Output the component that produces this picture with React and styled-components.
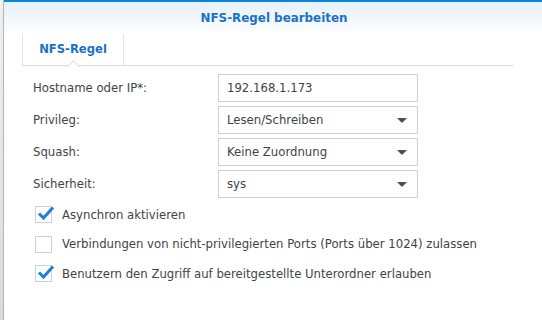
import React from "react";
import styled, { createGlobalStyle } from "styled-components";

const Global = createGlobalStyle`
  html, body {
    margin: 0;
    padding: 0;
    width: 542px;
    height: 320px;
    overflow: hidden;
    background: #fff;
  }
  body {
    font-family: "DejaVu Sans", Verdana, sans-serif;
  }
`;

const Screen = styled.div`
  display: flex;
  width: 542px;
  height: 320px;
`;

const Backdrop = styled.div`
  width: 3px;
  flex: none;
  background: linear-gradient(#f0f0f0, #dadada);
  border-right: 1px solid #b4b4b4;
`;

const Dialog = styled.div`
  flex: 1;
  display: flex;
  flex-direction: column;
  border-top: 2px solid #0a86d8;
  background: #fff;
`;

const Header = styled.div`
  height: 32px;
  display: flex;
  justify-content: center;
  align-items: center;
  background: linear-gradient(#e6f0fa, #fdfeff);
  h1 {
    margin: 0;
    font-size: 11.9px;
    font-weight: bold;
    color: #1a72c6;
    padding-left: 2px;
  }
`;

const TabBar = styled.div`
  position: relative;
  margin: 0 29px 0 18px;
  height: 31px;
  display: flex;
  border-bottom: 1px solid #dcdcdc;
`;

const Tab = styled.div`
  position: relative;
  width: 100px;
  display: flex;
  align-items: center;
  justify-content: center;
  padding-bottom: 2px;
  border-left: 1px solid #e4e4e4;
  border-right: 1px solid #e4e4e4;
  font-size: 11.6px;
  font-weight: bold;
  color: #1a72c6;
  &::after {
    content: "";
    position: absolute;
    left: 46px;
    bottom: -1px;
    width: 8px;
    height: 8px;
    background: #fff;
    border-left: 1px solid #dcdcdc;
    border-top: 1px solid #dcdcdc;
    transform: translateY(5px) rotate(45deg);
  }
`;

const Form = styled.div`
  display: flex;
  flex-direction: column;
  gap: 4px;
  padding: 8px 0 0 29px;
`;

const Row = styled.div`
  display: flex;
  align-items: center;
  height: 28px;
`;

const Label = styled.div`
  width: 185px;
  font-size: 11.7px;
  color: #404448;
`;

const Field = styled.div`
  box-sizing: border-box;
  width: 200px;
  height: 28px;
  border: 1px solid #cdd0d4;
  display: flex;
  align-items: center;
  justify-content: space-between;
  padding: 0 8px 0 8px;
  font-size: 11.7px;
  color: #404448;
`;

const Arrow = styled.span`
  width: 0;
  height: 0;
  border-left: 5px solid transparent;
  border-right: 5px solid transparent;
  border-top: 5px solid #4a4e54;
  margin-right: 2px;
`;

const Checks = styled.div`
  display: flex;
  flex-direction: column;
  gap: 12.5px;
  padding: 8px 0 0 31px;
`;

const CheckRow = styled.div`
  display: flex;
  align-items: center;
  gap: 10px;
  height: 17px;
  font-size: 11.7px;
  color: #404448;
`;

const Box = styled.span`
  position: relative;
  box-sizing: border-box;
  width: 17px;
  height: 17px;
  border: 1px solid #cdd0d4;
  background: #fff;
  svg {
    position: absolute;
    left: 1px;
    top: -2px;
  }
`;

const Check = ({ on, children }) => (
  <CheckRow>
    <Box>
      {on && (
        <svg width="18" height="16" viewBox="0 0 18 16">
          <path d="M2 8.5 L6.5 13 L16 2.5" fill="none" stroke="#1a80d8" strokeWidth="3" strokeLinejoin="miter" />
        </svg>
      )}
    </Box>
    {children}
  </CheckRow>
);

export default function App() {
  return (
    <>
      <Global />
      <Screen>
        <Backdrop />
        <Dialog>
          <Header>
            <h1>NFS-Regel bearbeiten</h1>
          </Header>
          <TabBar>
            <Tab>NFS-Regel</Tab>
          </TabBar>
          <Form>
            <Row>
              <Label>Hostname oder IP*:</Label>
              <Field>192.168.1.173</Field>
            </Row>
            <Row>
              <Label>Privileg:</Label>
              <Field>Lesen/Schreiben<Arrow /></Field>
            </Row>
            <Row>
              <Label>Squash:</Label>
              <Field>Keine Zuordnung<Arrow /></Field>
            </Row>
            <Row>
              <Label>Sicherheit:</Label>
              <Field>sys<Arrow /></Field>
            </Row>
          </Form>
          <Checks>
            <Check on>Asynchron aktivieren</Check>
            <Check>Verbindungen von nicht-privilegierten Ports (Ports über 1024) zulassen</Check>
            <Check on>Benutzern den Zugriff auf bereitgestellte Unterordner erlauben</Check>
          </Checks>
        </Dialog>
      </Screen>
    </>
  );
}
